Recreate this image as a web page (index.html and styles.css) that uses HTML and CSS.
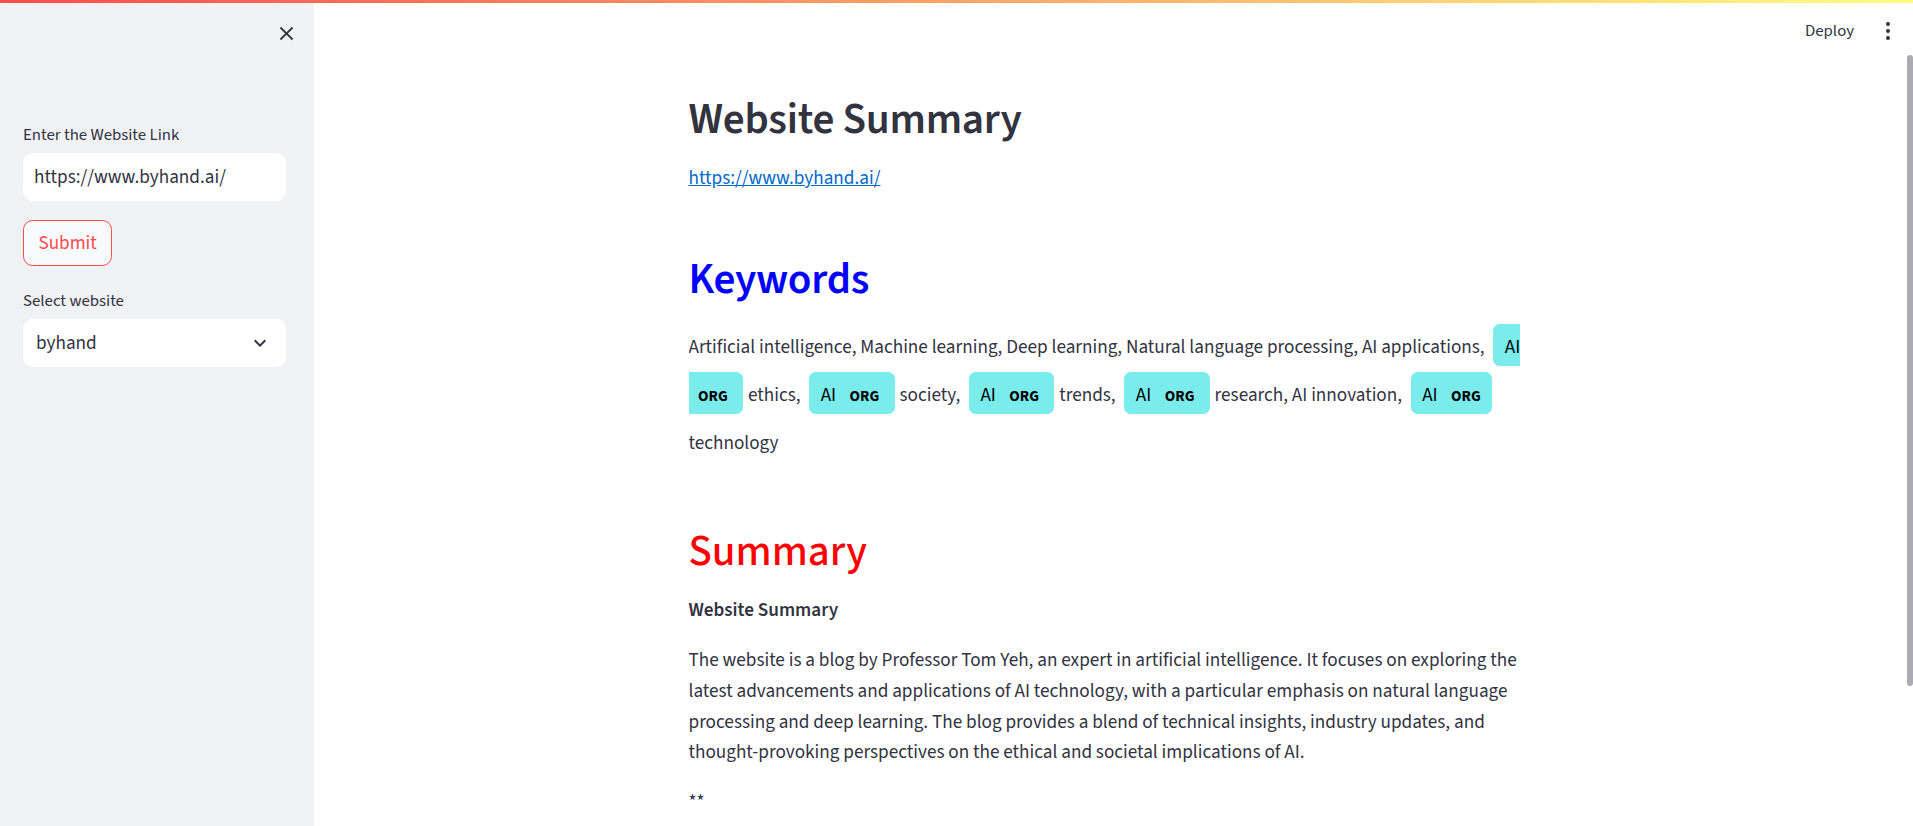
FILE: index.html
```html
<!DOCTYPE html>
<html lang="en">
<head>
<meta charset="utf-8">
<title>Website Summary</title>
<link rel="stylesheet" href="styles.css">
</head>
<body>
<div class="decoration"></div>
<div class="app">
  <aside class="sidebar">
    <div class="sidebar-top">
      <button class="close-btn" aria-label="Close sidebar">
        <svg viewBox="0 0 24 24" width="23" height="23"><path d="M19 6.41 17.59 5 12 10.59 6.41 5 5 6.41 10.59 12 5 17.59 6.41 19 12 13.41 17.59 19 19 17.59 13.41 12z" fill="#31333f"/></svg>
      </button>
    </div>
    <div class="sidebar-body">
      <label class="field-label">Enter the Website Link</label>
      <input class="text-input" type="text" value="https://www.byhand.ai/">
      <button class="submit-btn">Submit</button>
      <label class="field-label label-select">Select website</label>
      <div class="select">
        <span>byhand</span>
        <svg viewBox="0 0 24 24" width="24" height="24"><path d="M16.59 8.59 12 13.17 7.41 8.59 6 10l6 6 6-6z" fill="#31333f"/></svg>
      </div>
    </div>
  </aside>
  <main class="main">
    <header class="topbar">
      <span class="deploy">Deploy</span>
      <span class="kebab"><i></i><i></i><i></i></span>
    </header>
    <div class="content">
      <div class="block">
        <h1 class="title">Website Summary</h1>
        <p class="para"><a class="link" href="#">https://www.byhand.ai/</a></p>
        <h1 class="heading kw">Keywords</h1>
        <div class="entities">Artificial intelligence, Machine learning, Deep learning, Natural language processing, AI applications, <mark class="ent">AI <span class="ent-label">ORG</span> </mark> ethics, <mark class="ent">AI <span class="ent-label">ORG</span> </mark> society, <mark class="ent">AI <span class="ent-label">ORG</span> </mark> trends, <mark class="ent">AI <span class="ent-label">ORG</span> </mark> research, AI innovation, <mark class="ent">AI <span class="ent-label">ORG</span> </mark> technology</div>
        <h1 class="heading sum">Summary</h1>
        <p class="para"><strong>Website Summary</strong></p>
        <p class="para">The website is a blog by Professor Tom Yeh, an expert in artificial intelligence. It focuses on exploring the latest advancements and applications of AI technology, with a particular emphasis on natural language processing and deep learning. The blog provides a blend of technical insights, industry updates, and thought-provoking perspectives on the ethical and societal implications of AI.</p>
        <p class="para">**</p>
      </div>
    </div>
  </main>
  <div class="scroll-thumb"></div>
</div>
</body>
</html>
```
FILE: styles.css
```css
html, body {
  margin: 0;
  padding: 0;
  height: 100%;
  overflow: hidden;
}
body {
  font-family: "Source Sans 3", "Source Sans Pro", Lato, sans-serif;
  color: #31333f;
  background: #ffffff;
  font-size: 19.2px;
}
.decoration {
  position: fixed;
  top: 0;
  left: 0;
  right: 0;
  height: 3px;
  background: linear-gradient(90deg, #ff4b4b, #fffd80);
  z-index: 10;
}
.app {
  display: flex;
  height: 826px;
  position: relative;
}

/* Sidebar */
.sidebar {
  width: 314px;
  flex-shrink: 0;
  background: #f0f2f6;
  display: flex;
  flex-direction: column;
}
.sidebar-top {
  height: 66px;
  display: flex;
  justify-content: flex-end;
  align-items: center;
  padding-right: 16px;
}
.close-btn {
  border: 0;
  background: transparent;
  padding: 0;
  width: 23px;
  height: 23px;
  display: flex;
}
.sidebar-body {
  padding: 56px 28px 0 23px;
  display: flex;
  flex-direction: column;
}
.field-label {
  font-size: 16.8px;
  line-height: 26.9px;
  margin-bottom: 4.8px;
  color: #31333f;
}
.label-select {
  margin-top: 22px;
}
.text-input {
  box-sizing: border-box;
  height: 48px;
  width: 100%;
  margin-top: -1px;
  border: 1px solid #ffffff;
  border-radius: 9.6px;
  background: #ffffff;
  padding: 0 10px;
  font-family: inherit;
  font-size: 19.2px;
  color: #31333f;
  outline: none;
}
.submit-btn {
  align-self: flex-start;
  margin-top: 19px;
  box-sizing: border-box;
  height: 46px;
  padding: 0 14.4px;
  border: 1px solid #ff4b4b;
  border-radius: 9.6px;
  background: #f9fafb;
  color: #ff4b4b;
  font-family: inherit;
  font-size: 19.2px;
}
.select {
  box-sizing: border-box;
  height: 48px;
  border-radius: 9.6px;
  background: #ffffff;
  display: flex;
  align-items: center;
  justify-content: space-between;
  padding: 0 14px 0 13px;
  font-size: 19.2px;
}
.select svg {
  display: block;
}

/* Main */
.main {
  flex: 1;
  display: flex;
  flex-direction: column;
  min-width: 0;
}
.topbar {
  height: 62px;
  display: flex;
  justify-content: flex-end;
  align-items: center;
  padding-right: 9px;
}
.deploy {
  font-size: 16.8px;
  color: #31333f;
}
.kebab {
  width: 32px;
  margin-left: 18px;
  display: flex;
  flex-direction: column;
  align-items: center;
  gap: 3px;
}
.kebab i {
  display: block;
  width: 3.8px;
  height: 3.8px;
  border-radius: 50%;
  background: #31333f;
}
.content {
  padding: 30px 18px 0 0;
}
.block {
  width: 832px;
  margin: 0 auto;
  display: flex;
  flex-direction: column;
  gap: 19.2px;
}
.title, .heading {
  font-size: 43.2px;
  line-height: 51.84px;
  margin: 0;
  padding: 1.5px 0 0;
  margin-bottom: -1.5px;
}
.title {
  font-weight: 600;
  letter-spacing: -0.25px;
  color: #31333f;
}
.kw {
  margin-top: 39.5px;
  font-weight: 600;
  letter-spacing: -0.3px;
  color: #0000ff;
}
.sum {
  margin-top: 37.5px;
  font-weight: 500;
  color: #ff0000;
}
.para {
  margin: 0;
  line-height: 30.72px;
}
.para strong {
  font-weight: 600;
}
.link {
  color: #0068c9;
  text-decoration: underline;
}
.entities {
  line-height: 48px;
  overflow: hidden;
}
.ent {
  background: #7aecec;
  color: #000000;
  padding: 9.3px 0.6em 4.3px;
  margin: 0 0.25em;
  line-height: 1;
  border-radius: 0.35em;
}
.ent-label {
  font-size: 0.8em;
  font-weight: 700;
  line-height: 1;
  border-radius: 0.35em;
  vertical-align: middle;
  margin-left: 9.6px;
}
.scroll-thumb {
  position: absolute;
  right: 0;
  top: 55px;
  width: 6px;
  height: 631px;
  border-radius: 3px;
  background: #ababb1;
}
```
